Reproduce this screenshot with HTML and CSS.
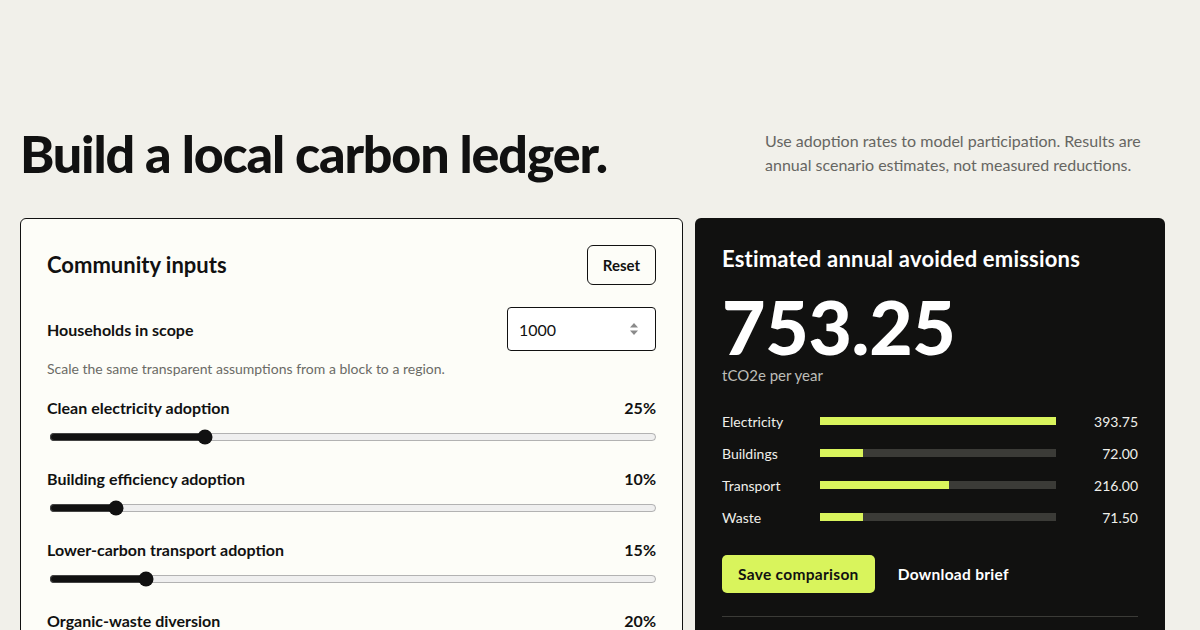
FILE: index.html
```html
<!DOCTYPE html>
<html lang="en">
<head>
<meta charset="utf-8">
<title>Local carbon ledger</title>
<link rel="stylesheet" href="styles.css">
</head>
<body>
<main class="page">
  <header class="intro">
    <h1 class="title">Build a local carbon ledger.</h1>
    <p class="lede">Use adoption rates to model participation. Results are annual scenario estimates, not measured reductions.</p>
  </header>

  <div class="layout">
    <section class="card inputs">
      <div class="card-head">
        <h2 class="card-title">Community inputs</h2>
        <button class="btn-outline" type="button">Reset</button>
      </div>

      <div class="field-row">
        <label class="field-label" for="households">Households in scope</label>
        <div class="number-box">
          <input id="households" class="number-input" type="text" value="1000">
          <svg class="spin" width="10" height="16" viewBox="0 0 10 16" aria-hidden="true">
            <path d="M5 2 L9 6.5 H1 Z" fill="#8a8a8a"/>
            <path d="M5 14 L9 9.5 H1 Z" fill="#8a8a8a"/>
          </svg>
        </div>
      </div>
      <p class="hint">Scale the same transparent assumptions from a block to a region.</p>

      <div class="slider-group">
        <div class="slider-head"><span>Clean electricity adoption</span><span>25%</span></div>
        <input class="range" type="range" min="0" max="100" value="25">
      </div>
      <div class="slider-group">
        <div class="slider-head"><span>Building efficiency adoption</span><span>10%</span></div>
        <input class="range" type="range" min="0" max="100" value="10">
      </div>
      <div class="slider-group">
        <div class="slider-head"><span>Lower-carbon transport adoption</span><span>15%</span></div>
        <input class="range" type="range" min="0" max="100" value="15">
      </div>
      <div class="slider-group">
        <div class="slider-head"><span>Organic-waste diversion</span><span>20%</span></div>
        <input class="range" type="range" min="0" max="100" value="20">
      </div>
    </section>

    <section class="card results">
      <h2 class="results-title">Estimated annual avoided emissions</h2>
      <div class="big-number">753.25</div>
      <div class="unit">tCO2e per year</div>

      <div class="bars">
        <div class="bar-row">
          <span class="bar-label">Electricity</span>
          <span class="bar-track"><span class="bar-fill" style="width:100%"></span></span>
          <span class="bar-value">393.75</span>
        </div>
        <div class="bar-row">
          <span class="bar-label">Buildings</span>
          <span class="bar-track"><span class="bar-fill" style="width:18.29%"></span></span>
          <span class="bar-value">72.00</span>
        </div>
        <div class="bar-row">
          <span class="bar-label">Transport</span>
          <span class="bar-track"><span class="bar-fill" style="width:54.86%"></span></span>
          <span class="bar-value">216.00</span>
        </div>
        <div class="bar-row">
          <span class="bar-label">Waste</span>
          <span class="bar-track"><span class="bar-fill" style="width:18.16%"></span></span>
          <span class="bar-value">71.50</span>
        </div>
      </div>

      <div class="actions">
        <button class="btn-lime" type="button">Save comparison</button>
        <button class="btn-ghost" type="button">Download brief</button>
      </div>

      <div class="assumptions">
        <h3 class="assumptions-title">Assumptions per participating household</h3>
        <ul class="assumption-list">
          <li>Clean electricity: 1.575 tCO2e avoided per year</li>
          <li>Building efficiency: 0.72 tCO2e avoided per year</li>
          <li>Lower-carbon transport: 1.44 tCO2e avoided per year</li>
          <li>Organic-waste diversion: 0.3575 tCO2e avoided per year</li>
        </ul>
      </div>
    </section>
  </div>
</main>
</body>
</html>
```

FILE: styles.css
```css
* { box-sizing: border-box; }

html, body {
  margin: 0;
  padding: 0;
}

body {
  background: #f1f0ea;
  color: #111111;
  font-family: "Lato", "Open Sans", "Liberation Sans", sans-serif;
}

.page {
  padding: 127px 35px 80px 20px;
}

.intro {
  display: flex;
  justify-content: space-between;
  align-items: center;
}

.title {
  margin: 0;
  font-size: 52px;
  line-height: 1;
  font-weight: 900;
  letter-spacing: -1.2px;
}

.lede {
  margin: 0;
  width: 400px;
  font-size: 16px;
  line-height: 24px;
  color: #666662;
}

.layout {
  display: grid;
  grid-template-columns: 663px 1fr;
  gap: 12px;
  margin-top: 39px;
  align-items: start;
}

.card {
  border-radius: 6px;
}

.inputs {
  background: #fdfdf8;
  border: 1px solid #111111;
  padding: 26px 26px 28px;
}

.card-head {
  display: flex;
  justify-content: space-between;
  align-items: center;
}

.card-title {
  margin: 0;
  font-size: 22px;
  font-weight: 700;
  line-height: 28px;
}

.btn-outline {
  height: 40px;
  padding: 0 15px;
  border: 1px solid #111111;
  border-radius: 6px;
  background: transparent;
  color: #111111;
  font-family: inherit;
  font-size: 15px;
  font-weight: 700;
}

.field-row {
  display: flex;
  justify-content: space-between;
  align-items: center;
  margin-top: 22px;
}

.field-label {
  font-size: 16px;
  font-weight: 700;
}

.number-box {
  width: 149px;
  height: 44px;
  border: 1px solid #111111;
  border-radius: 4px;
  background: #ffffff;
  display: flex;
  align-items: center;
  padding: 0 16px 0 11px;
}

.number-input {
  flex: 1;
  min-width: 0;
  border: 0;
  outline: none;
  background: transparent;
  padding: 0;
  font-family: inherit;
  font-size: 16px;
  color: #111111;
}

.spin {
  flex: none;
}

.hint {
  margin: 8px 0 0;
  font-size: 14px;
  line-height: 20px;
  color: #6b6b66;
}

.slider-group {
  margin-top: 18px;
}

.slider-group + .slider-group {
  margin-top: 23px;
}

.slider-head {
  display: flex;
  justify-content: space-between;
  font-size: 16px;
  font-weight: 700;
  line-height: 22px;
}

.range {
  display: block;
  width: calc(100% - 1px);
  height: 16px;
  margin: 10px 0 0 2px;
  accent-color: #111111;
}

.results {
  background: #111110;
  color: #ffffff;
  padding: 27px 27px 30px;
}

.results-title {
  margin: 0;
  font-size: 22px;
  line-height: 28px;
  font-weight: 700;
  letter-spacing: 0.2px;
}

.big-number {
  margin-top: 21px;
  font-size: 75px;
  line-height: 64px;
  font-weight: 900;
  letter-spacing: -0.3px;
}

.unit {
  margin-top: 7px;
  font-size: 15px;
  line-height: 20px;
  color: #bdbdb8;
}

.bars {
  margin-top: 26px;
  display: flex;
  flex-direction: column;
  gap: 12px;
}

.bar-row {
  display: grid;
  grid-template-columns: 98px 1fr 82px;
  align-items: center;
  height: 20px;
  font-size: 14px;
  color: #efefea;
}

.bar-track {
  display: block;
  height: 8px;
  background: #3b3b37;
}

.bar-fill {
  display: block;
  height: 100%;
  background: #d9f45c;
}

.bar-value {
  text-align: right;
}

.actions {
  display: flex;
  gap: 10px;
  margin-top: 28px;
}

.btn-lime {
  height: 38px;
  padding: 0 16px;
  border: 0;
  border-radius: 5px;
  background: #d9f45c;
  color: #111111;
  font-family: inherit;
  font-size: 15.5px;
  font-weight: 700;
  letter-spacing: 0.3px;
}

.btn-ghost {
  height: 38px;
  padding: 0 13px;
  border: 0;
  background: transparent;
  color: #ffffff;
  font-family: inherit;
  font-size: 15.5px;
  font-weight: 700;
  letter-spacing: 0.3px;
}

.assumptions {
  margin-top: 23px;
  border-top: 1px solid #3b3b37;
  padding-top: 20px;
}

.assumptions-title {
  margin: 0;
  font-size: 15px;
  font-weight: 700;
}

.assumption-list {
  margin: 10px 0 0;
  padding-left: 18px;
  font-size: 14px;
  line-height: 22px;
  color: #bdbdb8;
}
```
